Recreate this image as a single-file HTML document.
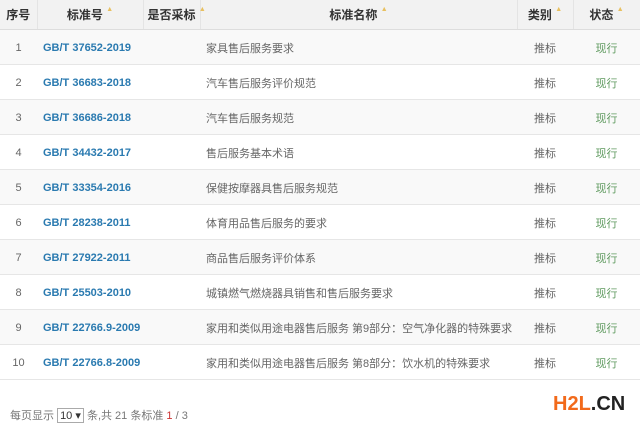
<!DOCTYPE html><html><head><meta charset="utf-8"><style>
body{margin:0;width:640px;height:426px;background:#fff;font-family:"Liberation Sans","Noto Sans CJK SC",sans-serif;overflow:hidden;position:relative}
table{border-collapse:collapse;position:absolute;left:0;top:0;width:640px;table-layout:fixed}
th{height:29px;background:#f2f2f2;font-size:12px;color:#333;font-weight:bold;border-right:1px solid #e4e4e4;border-bottom:1px solid #ddd;padding:0;white-space:nowrap}
td{height:33px;font-size:11px;color:#666;padding:1px 0 0 0;border-bottom:1px solid #e6e6e6}
tr:nth-child(even) td{background:#f9f9f9}
.c{text-align:center}
.s{font-weight:bold;color:#2a7ab0;padding-left:6px}
.n{padding-left:6px}
.g{color:#5f9a5f;text-align:center}
.a{color:#e8c060;font-size:7px;vertical-align:top}
.f{position:absolute;left:10px;top:407px;font-size:11px;color:#777}
.f span.b{display:inline-block;border:1px solid #aaa;padding:0 2px;color:#333;font-size:11px}
.logo{position:absolute;left:553px;top:393px;font-size:20px;font-weight:bold;letter-spacing:0px}
</style></head><body>
<table>
<colgroup><col width="37"><col width="106"><col width="57"><col width="317"><col width="56"><col width="67"></colgroup>
<tr><th>序号</th><th>标准号 <span class="a">▲</span></th><th style="text-align:left;padding-left:4px">是否采标 <span class="a">▲</span></th><th>标准名称 <span class="a">▲</span></th><th>类别 <span class="a">▲</span></th><th>状态 <span class="a">▲</span></th></tr>
<tr><td class="c">1</td><td class="s">GB/T 37652-2019</td><td></td><td class="n">家具售后服务要求</td><td class="c">推标</td><td class="g">现行</td></tr>
<tr><td class="c">2</td><td class="s">GB/T 36683-2018</td><td></td><td class="n">汽车售后服务评价规范</td><td class="c">推标</td><td class="g">现行</td></tr>
<tr><td class="c">3</td><td class="s">GB/T 36686-2018</td><td></td><td class="n">汽车售后服务规范</td><td class="c">推标</td><td class="g">现行</td></tr>
<tr><td class="c">4</td><td class="s">GB/T 34432-2017</td><td></td><td class="n">售后服务基本术语</td><td class="c">推标</td><td class="g">现行</td></tr>
<tr><td class="c">5</td><td class="s">GB/T 33354-2016</td><td></td><td class="n">保健按摩器具售后服务规范</td><td class="c">推标</td><td class="g">现行</td></tr>
<tr><td class="c">6</td><td class="s">GB/T 28238-2011</td><td></td><td class="n">体育用品售后服务的要求</td><td class="c">推标</td><td class="g">现行</td></tr>
<tr><td class="c">7</td><td class="s">GB/T 27922-2011</td><td></td><td class="n">商品售后服务评价体系</td><td class="c">推标</td><td class="g">现行</td></tr>
<tr><td class="c">8</td><td class="s">GB/T 25503-2010</td><td></td><td class="n">城镇燃气燃烧器具销售和售后服务要求</td><td class="c">推标</td><td class="g">现行</td></tr>
<tr><td class="c">9</td><td class="s">GB/T 22766.9-2009</td><td></td><td class="n" style="white-space:nowrap">家用和类似用途电器售后服务 第9部分：空气净化器的特殊要求</td><td class="c">推标</td><td class="g">现行</td></tr>
<tr><td class="c">10</td><td class="s">GB/T 22766.8-2009</td><td></td><td class="n" style="white-space:nowrap">家用和类似用途电器售后服务 第8部分：饮水机的特殊要求</td><td class="c">推标</td><td class="g">现行</td></tr>
</table>
<div class="f">每页显示 <span class="b">10 ▾</span> 条,共 21 条标准 <span style="color:#c33">1</span> / 3</div>
<div class="logo"><span style="color:#f26a1b">H2L</span><span style="color:#222">.CN</span></div>
</body></html>
